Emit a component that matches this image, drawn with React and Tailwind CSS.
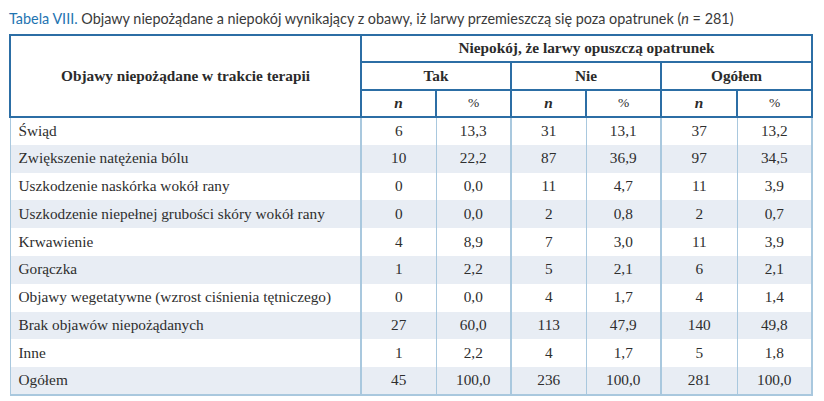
const rows = [
  ["Świąd", "6", "13,3", "31", "13,1", "37", "13,2"],
  ["Zwiększenie natężenia bólu", "10", "22,2", "87", "36,9", "97", "34,5"],
  ["Uszkodzenie naskórka wokół rany", "0", "0,0", "11", "4,7", "11", "3,9"],
  ["Uszkodzenie niepełnej grubości skóry wokół rany", "0", "0,0", "2", "0,8", "2", "0,7"],
  ["Krwawienie", "4", "8,9", "7", "3,0", "11", "3,9"],
  ["Gorączka", "1", "2,2", "5", "2,1", "6", "2,1"],
  ["Objawy wegetatywne (wzrost ciśnienia tętniczego)", "0", "0,0", "4", "1,7", "4", "1,4"],
  ["Brak objawów niepożądanych", "27", "60,0", "113", "47,9", "140", "49,8"],
  ["Inne", "1", "2,2", "4", "1,7", "5", "1,8"],
  ["Ogółem", "45", "100,0", "236", "100,0", "281", "100,0"],
];

export default function App() {
  const head = "border-2 border-[#2c6ea5] font-bold text-[#2b2b2b]";
  return (
    <div className="w-[824px] h-[401px] bg-white pl-[9px] pt-[10px] overflow-hidden">
      {/* Caption */}
      <p className="font-['Lato',sans-serif] text-[14.4px] leading-[18px] text-[#3a3a3a] mb-[6px] whitespace-nowrap">
        <span className="text-[#1f74b1]">Tabela VIII.</span> Objawy niepożądane a niepokój wynikający z obawy, iż larwy
        przemieszczą się poza opatrunek (<i>n</i> = 281)
      </p>

      <table className="w-[802px] border-collapse table-fixed font-['Liberation_Serif',serif] text-[15.3px] text-[#2e2e2e]">
        <colgroup>
          <col className="w-[351px]" />
          <col className="w-[75px]" />
          <col className="w-[75px]" />
          <col className="w-[75px]" />
          <col className="w-[75px]" />
          <col className="w-[76px]" />
          <col className="w-[75px]" />
        </colgroup>
        <thead>
          <tr className="h-[27px]">
            <th rowSpan={3} className={head + " text-center"}>
              Objawy niepożądane w trakcie terapii
            </th>
            <th colSpan={6} className={head}>
              Niepokój, że larwy opuszczą opatrunek
            </th>
          </tr>
          <tr className="h-[28px]">
            <th colSpan={2} className={head}>Tak</th>
            <th colSpan={2} className={head}>Nie</th>
            <th colSpan={2} className={head}>Ogółem</th>
          </tr>
          <tr className="h-[27px]">
            <th className={head + " italic"}>n</th>
            <th className={head + " font-normal text-[13.5px]"}>%</th>
            <th className={head + " italic"}>n</th>
            <th className={head + " font-normal text-[13.5px]"}>%</th>
            <th className={head + " italic"}>n</th>
            <th className={head + " font-normal text-[13.5px]"}>%</th>
          </tr>
        </thead>
        <tbody>
          {rows.map((r, i) => (
            <tr key={i} className={"h-[27.8px] " + (i % 2 === 1 ? "bg-[#e8edf4]" : "bg-white")}>
              <td className="pl-[8px] text-left whitespace-nowrap border-l border-r-2 border-[#a9c8de]">
                {r[0]}
              </td>
              <td className="text-center border-r border-[#a9c8de]">{r[1]}</td>
              <td className="text-center border-r-2 border-[#a9c8de]">{r[2]}</td>
              <td className="text-center border-r border-[#a9c8de]">{r[3]}</td>
              <td className="text-center border-r-2 border-[#a9c8de]">{r[4]}</td>
              <td className="text-center border-r border-[#a9c8de]">{r[5]}</td>
              <td className="text-center border-r-2 border-[#a9c8de]">{r[6]}</td>
            </tr>
          ))}
          <tr>
            <td colSpan={7} className="h-0 border-t-2 border-[#a9c8de] p-0"></td>
          </tr>
        </tbody>
      </table>
    </div>
  );
}
